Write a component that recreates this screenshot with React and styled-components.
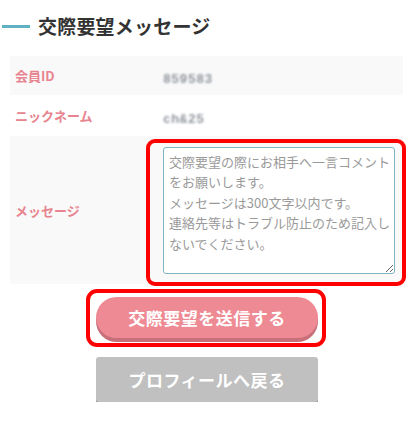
import React from "react";
import styled, { createGlobalStyle } from "styled-components";

const GlobalStyle = createGlobalStyle`
  html, body {
    margin: 0;
    padding: 0;
    background: #fff;
  }
  body {
    font-family: "Noto Sans CJK JP", "Noto Sans", sans-serif;
    color: #333;
  }
`;

const Page = styled.div`
  width: 413px;
  padding: 12px 0 0 0;
  box-sizing: border-box;
`;

const Heading = styled.h2`
  display: flex;
  align-items: center;
  gap: 8px;
  margin: 0 0 16px 2px;
  height: 28px;
  font-size: 19px;
  font-weight: 700;
  color: #333;
  line-height: 28px;
  letter-spacing: 0.2px;

  &::before {
    content: "";
    display: block;
    width: 28px;
    height: 3px;
    background: #5fb0c3;
  }
`;

const Table = styled.div`
  margin: 0 10px;
  display: flex;
  flex-direction: column;
`;

const Row = styled.div`
  display: grid;
  grid-template-columns: 143px 1fr;
  align-items: center;
  min-height: ${(p) => p.$height}px;
  background: ${(p) => (p.$shade ? "#f9f9f9" : "#fff")};
`;

const Label = styled.div`
  padding-left: 5px;
  font-size: 13px;
  font-weight: 700;
  color: #e8848f;
`;

const Value = styled.div`
  position: relative;
  padding: ${(p) => (p.$field ? "10px 8px 10px 10px" : "0 10px")};
`;

const Blurred = styled.span`
  display: inline-block;
  font-size: 13px;
  font-weight: 700;
  font-family: "Liberation Mono", monospace;
  letter-spacing: 0.5px;
  color: #6f7680;
  filter: blur(1.3px);
  opacity: 0.75;
`;

const Message = styled.textarea`
  display: block;
  width: 100%;
  height: 127px;
  box-sizing: border-box;
  border: 1px solid #7fb5c2;
  border-radius: 3px;
  padding: 4px 1px 4px 5px;
  font-family: "Noto Sans CJK JP", sans-serif;
  font-size: 13px;
  line-height: 20.5px;
  color: #333;
  background: #fff;
  resize: vertical;
  outline: none;
  overflow: hidden;

  &::placeholder {
    color: #9a9a9a;
  }
`;

const Highlight = styled.div`
  position: absolute;
  left: -7px;
  top: 2px;
  right: -3px;
  bottom: -2px;
  border: 4px solid #ff0000;
  border-radius: 9px;
  pointer-events: none;
`;

const Actions = styled.div`
  display: flex;
  flex-direction: column;
  align-items: center;
  gap: 18px;
  padding-top: 12px;
  margin-left: 1px;
`;

const HighlightWrap = styled.div`
  position: relative;
  padding: 1px 0;
`;

const ButtonHighlight = styled.div`
  position: absolute;
  left: -10px;
  right: -8px;
  top: -7px;
  bottom: -8px;
  border: 4px solid #ff0000;
  border-radius: 11px;
  pointer-events: none;
`;

const Button = styled.button`
  display: block;
  width: 222px;
  height: ${(p) => p.$h}px;
  border: none;
  border-radius: ${(p) => (p.$pill ? "22px" : "3px")};
  background: ${(p) => p.$bg};
  box-shadow: 0 ${(p) => p.$depth}px 0 ${(p) => p.$shadow};
  color: ${(p) => p.$fg};
  font-family: "Noto Sans CJK JP", sans-serif;
  font-size: 17px;
  font-weight: 700;
  letter-spacing: 0.5px;
  cursor: pointer;
`;

const placeholder =
  "交際要望の際にお相手へ一言コメント\nをお願いします。\nメッセージは300文字以内です。\n連絡先等はトラブル防止のため記入し\nないでください。";

export default function App() {
  return (
    <>
      <GlobalStyle />
      <Page>
        <Heading>交際要望メッセージ</Heading>
        <Table>
          <Row $shade $height={39}>
            <Label>会員ID</Label>
            <Value>
              <Blurred>859583</Blurred>
            </Value>
          </Row>
          <Row $height={41}>
            <Label>ニックネーム</Label>
            <Value>
              <Blurred>ch&amp;25</Blurred>
            </Value>
          </Row>
          <Row $shade $height={148}>
            <Label>メッセージ</Label>
            <Value $field>
              <Message placeholder={placeholder} />
              <Highlight />
            </Value>
          </Row>
        </Table>
        <Actions>
          <HighlightWrap>
            <Button $pill $h={41} $bg="#ee8a93" $shadow="#c8707a" $depth={4} $fg="#fff">
              交際要望を送信する
            </Button>
            <ButtonHighlight />
          </HighlightWrap>
          <Button $h={45} $bg="#c0c0c0" $shadow="#9a9a9a" $depth={4} $fg="#ffffff">
            プロフィールへ戻る
          </Button>
        </Actions>
      </Page>
    </>
  );
}
